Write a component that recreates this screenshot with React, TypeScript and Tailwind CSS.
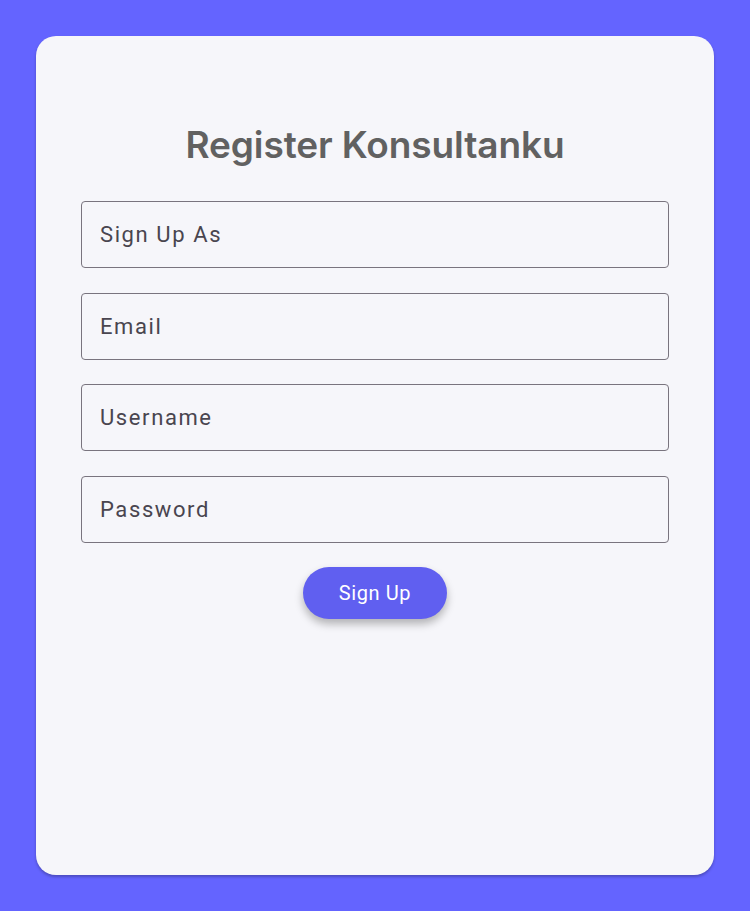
import type { FC } from 'react';

const FIELDS = ['Sign Up As', 'Email', 'Username', 'Password'];

const App: FC = () => {
  return (
    <div className="min-h-[911px] w-full bg-[#6464ff] p-9 flex">
      <div className="flex-1 bg-[#f6f6fa] rounded-[20px] shadow-[0_2px_3px_rgba(0,0,0,0.25)] px-[45px] pt-[86px] flex flex-col items-center">
        <h1 className="font-['Inter',sans-serif] font-semibold text-[37px] leading-[46px] text-[#616161] tracking-[-0.1px]">
          Register Konsultanku
        </h1>

        {/* --- FORM --- */}
        <div className="w-full mt-[33px] flex flex-col gap-[24.7px]">
          {FIELDS.map((label) => (
            <div
              key={label}
              className="h-[67px] w-full border border-[#79747e] rounded-[4px] flex items-center pl-[18px] font-['Roboto',sans-serif] text-[22px] tracking-[1.6px] text-[#49454f]"
            >
              {label}
            </div>
          ))}
        </div>

        <button className="mt-[24px] w-[144px] h-[52px] rounded-full bg-[#605ff0] text-white font-['Roboto',sans-serif] text-[20px] tracking-[0.6px] shadow-[0_5px_8px_rgba(0,0,0,0.28)]">
          Sign Up
        </button>
      </div>
    </div>
  );
};

export default App;
